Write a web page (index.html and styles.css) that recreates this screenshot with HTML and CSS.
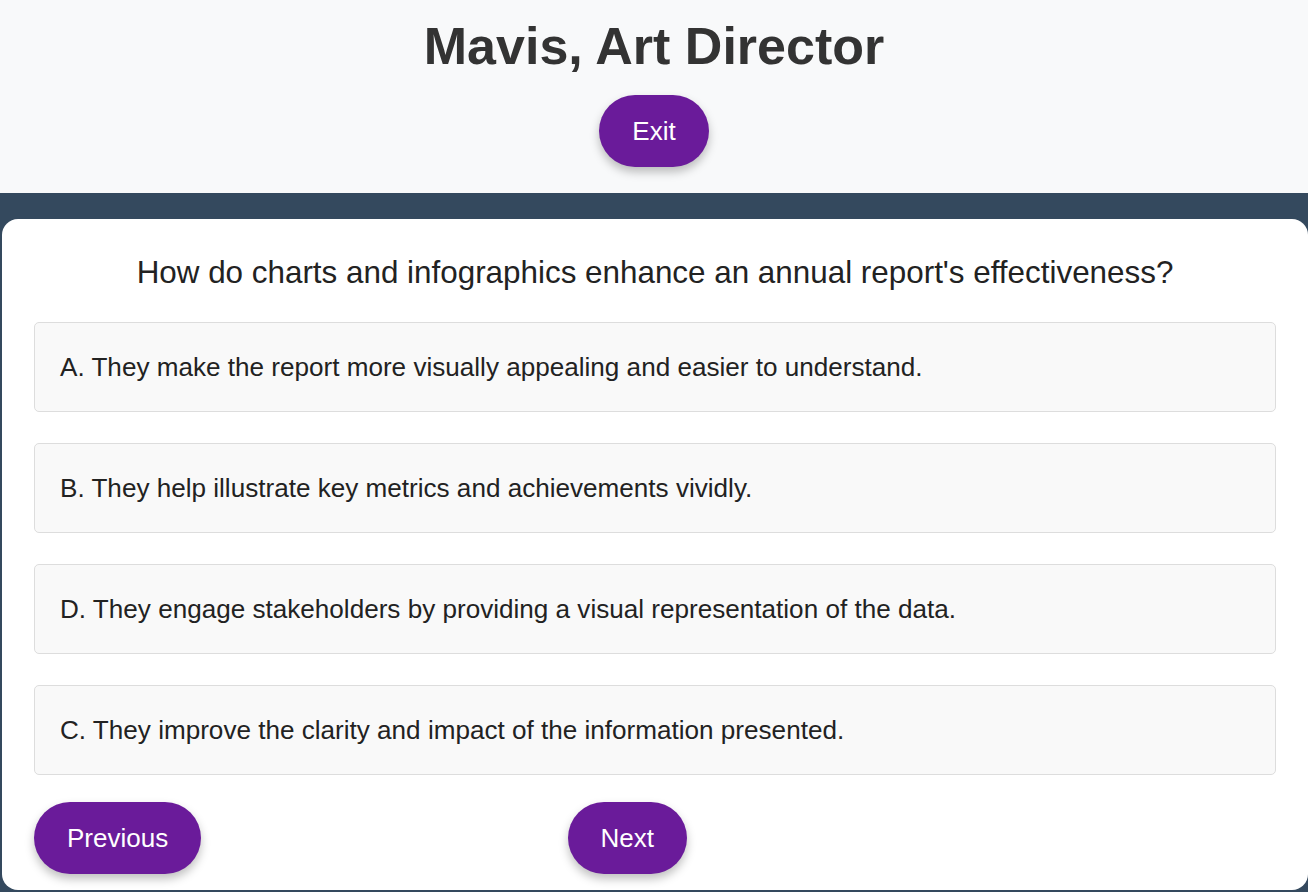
FILE: index.html
```html
<!DOCTYPE html>
<html lang="en">
<head>
<meta charset="utf-8">
<title>Mavis, Art Director</title>
<link rel="stylesheet" href="styles.css">
</head>
<body>
<header class="top">
  <h1 class="title">Mavis, Art Director</h1>
  <button class="pill exit">Exit</button>
</header>
<main class="card">
  <h2 class="question">How do charts and infographics enhance an annual report's effectiveness?</h2>
  <div class="options">
    <div class="option">A. They make the report more visually appealing and easier to understand.</div>
    <div class="option">B. They help illustrate key metrics and achievements vividly.</div>
    <div class="option">D. They engage stakeholders by providing a visual representation of the data.</div>
    <div class="option">C. They improve the clarity and impact of the information presented.</div>
  </div>
  <div class="nav">
    <button class="pill">Previous</button>
    <button class="pill">Next</button>
  </div>
</main>
</body>
</html>
```
FILE: styles.css
```css
html, body {
  margin: 0;
  padding: 0;
}
html {
  background: #34495e;
}
body {
  font-family: "Liberation Sans", Arial, sans-serif;
  color: #222;
}
.top {
  background: #f8f9fa;
  text-align: center;
  padding: 18px 0 26px;
}
.title {
  margin: 0;
  font-size: 52px;
  line-height: 56px;
  font-weight: bold;
  color: #333;
}
.pill {
  background: #6a1b9a;
  color: #fff;
  border: none;
  border-radius: 40px;
  font-family: "Liberation Sans", Arial, sans-serif;
  font-size: 26px;
  line-height: 28px;
  padding: 22px 33px;
  box-shadow: 0 5px 10px rgba(0, 0, 0, 0.25);
  cursor: pointer;
}
.exit {
  margin-top: 21px;
}
.card {
  margin: 26px 0 0 2px;
  background: #fff;
  border-radius: 16px;
  padding: 36px 32px 16px;
}
.question {
  margin: 0 0 31px;
  text-align: center;
  font-size: 31.4px;
  line-height: 36px;
  font-weight: normal;
  color: #222;
}
.options {
  display: flex;
  flex-direction: column;
  gap: 31px;
}
.option {
  background: #f9f9f9;
  border: 1px solid #ddd;
  border-radius: 5px;
  padding: 30px 25px;
  font-size: 26.1px;
  line-height: 28px;
  color: #222;
}
.nav {
  display: flex;
  justify-content: space-between;
  width: 653px;
  margin-top: 27px;
}
```
